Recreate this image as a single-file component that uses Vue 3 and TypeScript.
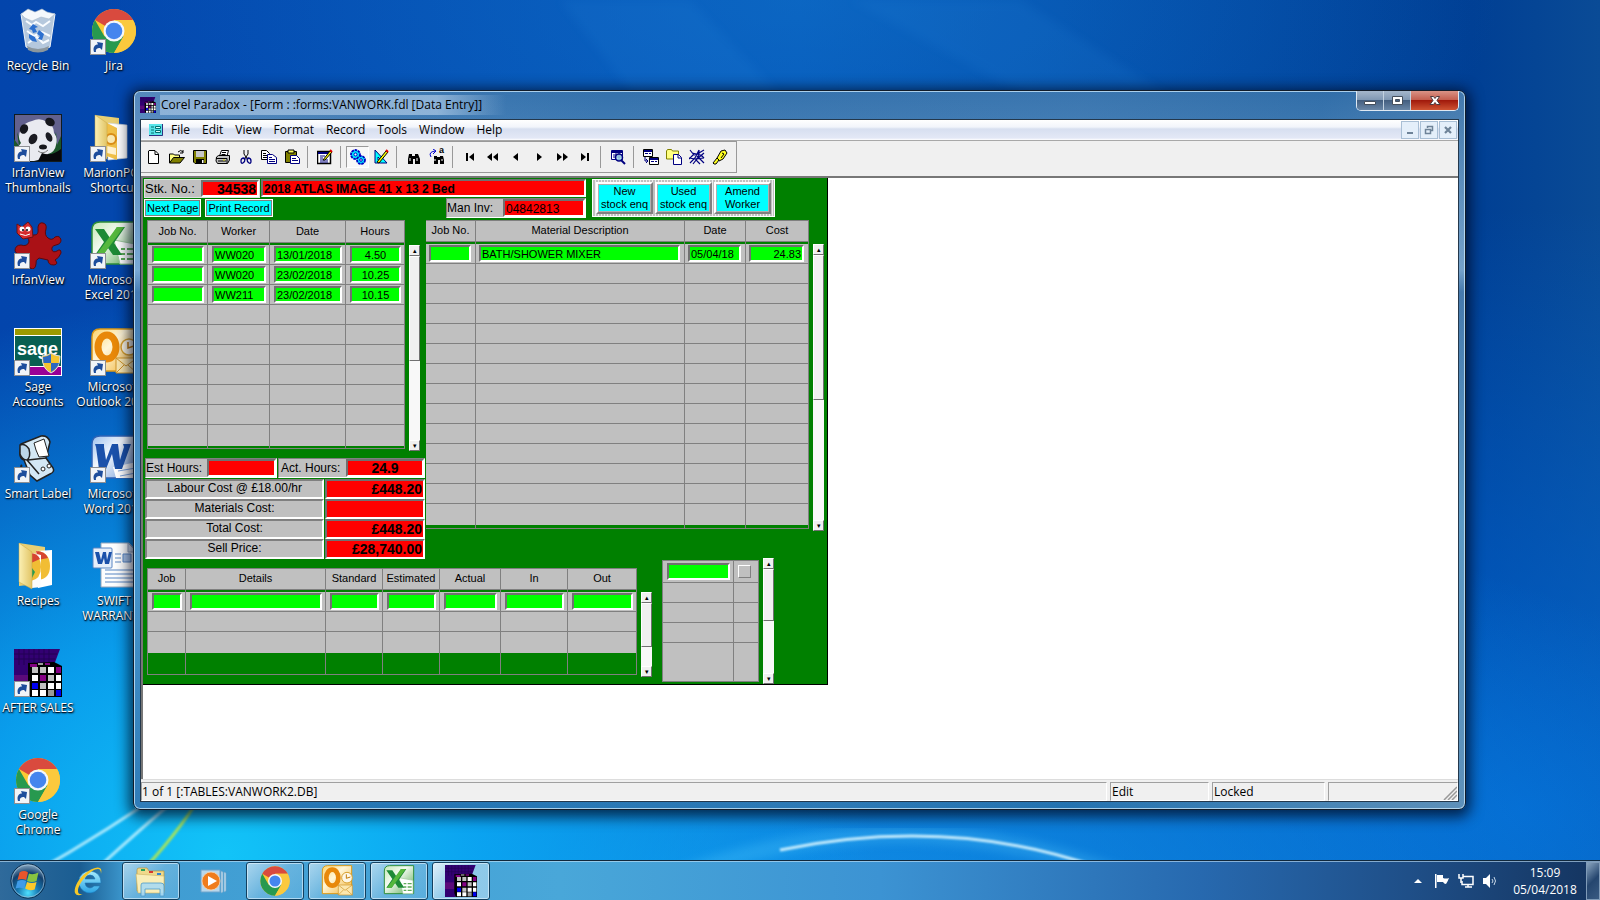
<script setup lang="ts">
interface Shortcut { icon: string; label: string; link: boolean }
interface Column { name: string; width: number }
interface Tool { icon?: string; label?: string; pressed?: boolean; sep?: boolean }

const shortcuts: Shortcut[] = [
  { icon: 'bin', label: 'Recycle Bin', link: false },
  { icon: 'panda', label: 'IrfanView\nThumbnails', link: true },
  { icon: 'irfan', label: 'IrfanView', link: true },
  { icon: 'sage', label: 'Sage\nAccounts', link: true },
  { icon: 'printer', label: 'Smart Label', link: true },
  { icon: 'recipes', label: 'Recipes', link: false },
  { icon: 'paradox', label: 'AFTER SALES', link: true },
  { icon: 'chrome', label: 'Google\nChrome', link: true },
  { icon: 'chrome', label: 'Jira', link: true },
  { icon: 'folder', label: 'MarionPC -\nShortcut', link: true },
  { icon: 'excel', label: 'Microsoft\nExcel 2010', link: true },
  { icon: 'outlook', label: 'Microsoft\nOutlook 2010', link: true },
  { icon: 'word', label: 'Microsoft\nWord 2010', link: true },
  { icon: 'document', label: 'SWIFT\nWARRANTY', link: false },
]

const menus = ['File', 'Edit', 'View', 'Format', 'Record', 'Tools', 'Window', 'Help']

const tools: Tool[] = [
  { icon: 'new', label: 'New' }, { icon: 'open', label: 'Open' }, { icon: 'save', label: 'Save' },
  { icon: 'print', label: 'Print' }, { icon: 'cut', label: 'Cut' }, { icon: 'copy', label: 'Copy' },
  { icon: 'paste', label: 'Paste' }, { sep: true },
  { icon: 'edit', label: 'Edit data' }, { sep: true },
  { icon: 'gears', label: 'Run form', pressed: true }, { icon: 'design', label: 'Design form' }, { sep: true },
  { icon: 'find', label: 'Locate value' }, { icon: 'replace', label: 'Locate next' }, { sep: true },
  { icon: 'first', label: 'First record' }, { icon: 'rew', label: 'Previous set' },
  { icon: 'prev', label: 'Previous record' }, { icon: 'next', label: 'Next record' },
  { icon: 'fwd', label: 'Next set' }, { icon: 'last', label: 'Last record' }, { sep: true },
  { icon: 'filter', label: 'Filter' }, { sep: true },
  { icon: 'model', label: 'Data model' }, { icon: 'explorer', label: 'Project viewer' },
  { icon: 'tree', label: 'Object tree' }, { icon: 'expert', label: 'Expert' },
]

const workCols: Column[] = [
  { name: 'Job No.', width: 60 }, { name: 'Worker', width: 62 },
  { name: 'Date', width: 76 }, { name: 'Hours', width: 60 },
]
const work: string[][] = [
  ['', 'WW020', '13/01/2018', '4.50'],
  ['', 'WW020', '23/02/2018', '10.25'],
  ['', 'WW211', '23/02/2018', '10.15'],
]
const materialCols: Column[] = [
  { name: 'Job No.', width: 49 }, { name: 'Material Description', width: 209 },
  { name: 'Date', width: 61 }, { name: 'Cost', width: 64 },
]
const material: string[] = ['', 'BATH/SHOWER MIXER', '05/04/18', '24.83']
const jobCols: Column[] = [
  { name: 'Job', width: 38 }, { name: 'Details', width: 140 }, { name: 'Standard', width: 57 },
  { name: 'Estimated', width: 57 }, { name: 'Actual', width: 61 }, { name: 'In', width: 67 }, { name: 'Out', width: 70 },
]
const costs = [
  { id: 'labour', label: 'Labour Cost @ £18.00/hr', value: '£448.20' },
  { id: 'materials', label: 'Materials Cost:', value: '' },
  { id: 'total', label: 'Total Cost:', value: '£448.20' },
  { id: 'sell', label: 'Sell Price:', value: '£28,740.00' },
]
const tasks = [
  { icon: 'ie', label: 'Internet Explorer', open: false },
  { icon: 'files', label: 'Windows Explorer', open: true },
  { icon: 'media', label: 'Windows Media Player', open: false },
  { icon: 'chrome', label: 'Google Chrome', open: true },
  { icon: 'outlook', label: 'Microsoft Outlook', open: true },
  { icon: 'excel', label: 'Microsoft Excel', open: true },
  { icon: 'paradox', label: 'Corel Paradox', open: true, active: true },
]
</script>

<template>
  <svg class="sprite" aria-hidden="true">
    <defs>
      <linearGradient id="g-fold" x1="0" x2="1"><stop offset="0" stop-color="#fbf0b4" /><stop offset="1" stop-color="#e2c566" /></linearGradient>
      <linearGradient id="g-green" x1="0" y1="0" x2="1" y2="1"><stop offset="0" stop-color="#c4e8b4" /><stop offset=".4" stop-color="#f4fbf2" /><stop offset="1" stop-color="#55a850" /></linearGradient>
      <linearGradient id="g-orange" x1="0" y1="0" x2="1" y2="1"><stop offset="0" stop-color="#fbd46c" /><stop offset=".4" stop-color="#fff6d8" /><stop offset="1" stop-color="#f0b030" /></linearGradient>
      <linearGradient id="g-blue" x1="0" y1="0" x2="1" y2="1"><stop offset="0" stop-color="#9cc0ec" /><stop offset=".4" stop-color="#f2f7fe" /><stop offset="1" stop-color="#6f9ad6" /></linearGradient>
      <linearGradient id="g-ie" x1="0" y1="0" x2="0" y2="1"><stop offset="0" stop-color="#a8ecff" /><stop offset="1" stop-color="#2ba4e4" /></linearGradient>
      <radialGradient id="g-orb" cx=".5" cy=".85" r=".9"><stop offset="0" stop-color="#4fe0ff" /><stop offset=".35" stop-color="#1576b0" /><stop offset=".65" stop-color="#123f6c" /><stop offset="1" stop-color="#a9c4d8" /></radialGradient>
    </defs>
    <symbol id="i-link" viewBox="0 0 16 16">
      <rect x=".5" y=".5" width="15" height="15" fill="#f1f4f8" stroke="#8d8f93" />
      <path d="M4 13C2.500 8 5 5.500 8 5.500L7 3l6 1-1 7-2-2C7 9 5.500 10 6 13z" fill="#1d4d9c" />
    </symbol>
    <symbol id="i-bin" viewBox="0 0 48 48">
      <path d="M7 7l5 33q12 6 24 0l5-33z" fill="#c9d6e2" fill-opacity=".9" stroke="#eef4fa" />
      <path d="M7 7l7-5 7 3 7-3 5 3 8 2-6 5-8-2-9 4-7-3z" fill="#f4f8fc" stroke="#a8b9c9" stroke-width=".6" />
      <path d="M12 14l6 4 4-3 7 4 7-5M13 24l7 5 8-4 8 4M14 36l9-6 6 6 6-3" stroke="#f9fcff" stroke-width="2" fill="none" />
      <path d="M15 22l4-5 5 3-3 1 2 4-4 1-1-3zM25 23l5 4-2 6-4-1 2-3-3-2zM15 27l6 3 2 5-5-1-3-3z" fill="#2d70cf" />
      <path d="M13 39q11 6 22 0l-1 4q-10 5-20 0z" fill="#8b969d" />
    </symbol>
    <symbol id="i-chrome" viewBox="0 0 48 48">
      <circle cx="24" cy="24" r="22" fill="#fcc934" />
      <path d="M24 24L4.950 13A22 22 0 0 1 43.050 13L24 13z" fill="#d94a3e" />
      <path d="M4.950 13A22 22 0 0 0 24 46L33.500 29.500 24 24 14.500 29.500z" fill="#27994f" />
      <path d="M43.050 13A22 22 0 0 1 24 46L33.500 29.500 33 18 24 13z" fill="#fbc93d" />
      <circle cx="24" cy="24" r="10.500" fill="#f4f7fb" /><circle cx="24" cy="24" r="8.300" fill="#4585ee" />
    </symbol>
    <symbol id="i-panda" viewBox="0 0 48 48">
      <rect width="48" height="48" fill="#111b1d" /><rect x="1" y="1" width="46" height="32" fill="#62618e" />
      <path d="M0 47V25l5 7-2-14 6 16V20l4 22zM34 47l3-26 1 12 4-15 1 13 4-9v25z" fill="#1c562b" />
      <path d="M4 47Q0 36 7 29q-4-6 0-14 4-7 11-8 8-4 15 1 7 3 7 11 4 5 2 12-1 7-8 9-3 5-14 7z" fill="#e9eaf0" />
      <ellipse cx="10" cy="15" rx="4" ry="5" transform="rotate(25 10 15)" fill="#16171d" /><ellipse cx="36" cy="8" rx="5" ry="4" transform="rotate(30 36 8)" fill="#16171d" />
      <ellipse cx="19" cy="25" rx="4" ry="5.500" transform="rotate(30 19 25)" fill="#1b1b22" /><ellipse cx="35" cy="23" rx="3" ry="5" transform="rotate(-25 35 23)" fill="#1b1b22" />
      <ellipse cx="29" cy="33" rx="4" ry="2.500" fill="#17171c" /><path d="M24 47l4-8q9 4 19-4v12z" fill="#08090c" />
      <path d="M24 37q5 4 10-1" stroke="#777" fill="none" />
    </symbol>
    <symbol id="i-irfan" viewBox="0 0 48 48">
      <path d="M20 14C25 14 24 10 24 6q1-5 5-4 4 1 3 6-2 6 2 9 4 3 7-1 5-2 6 3 0 4-5 5-5 1-4 5 1 3 5 1 4-3 4 2-2 5-6 7 4 4-1 5-6 0-6-5l-9-2q-4 2-3 6-1 7-6 4-3-5-1-10-2-6-7-4Q3 34 1 30q0-6 6-6 6 2 8-3 0-5-5-6z" fill="#aa1116" stroke="#5d080b" />
      <path d="M3 3l5 3 6-5 4 5 1 10-10 2-6-6z" fill="#d62b2d" stroke="#6d1012" /><circle cx="8" cy="8" r="2.500" fill="#fff" /><circle cx="14" cy="8" r="2.500" fill="#fff" /><circle cx="9" cy="9" r="1" /><circle cx="13" cy="9" r="1" /><path d="M6 13q6 3 10 0" stroke="#fff" fill="none" />
    </symbol>
    <symbol id="i-sage" viewBox="0 0 48 48">
      <rect width="48" height="48" fill="#fff" /><rect x="1" y="1" width="46" height="6" fill="#9c9a00" /><rect x="1" y="8" width="46" height="30" fill="#085f52" /><rect x="1" y="39" width="46" height="8" fill="#990096" />
    </symbol>
    <symbol id="i-shield" viewBox="0 0 20 22">
      <path d="M1 4q5 0 9-3 4 3 9 3 0 13-9 17Q1 17 1 4z" fill="#f4c52f" stroke="#d9dfe6" /><path d="M2 5q4 0 8-3v9H2.500zM10 11h8q-2 6-8 9z" fill="#2b68c2" />
    </symbol>
    <symbol id="i-printer" viewBox="0 0 48 48">
      <path d="M8 30q-3 2 5 9" fill="none" stroke="#222" stroke-width="2" />
      <path d="M7 9l20-8q7-1 9 6l-4 16 7 10q2 4-3 6l-13 7-7-6-6-15q-5-2-4-8z" fill="#d4e8f5" stroke="#222" stroke-width="1.500" />
      <path d="M6 10q5-2 9 4 2 8-2 11-5 0-7-6zM13 25l12 14M14 25l18-2" fill="#bdd7e8" stroke="#222" stroke-width="1.500" />
      <path d="M20 8l10-4 5 17-10 1-3-7z" fill="#fff" stroke="#222" /><circle cx="29" cy="34" r="2" fill="#fff" stroke="#222" /><circle cx="35" cy="31" r="2" fill="#fff" stroke="#222" />
    </symbol>
    <symbol id="i-recipes" viewBox="0 0 48 48">
      <path d="M5 1l26 4v36L5 44z" fill="#e8cf73" /><path d="M22 9l16-1v35l-14 3z" fill="#fff" /><path d="M24 9q12 2 12 15T24 38z" fill="#f1bd34" /><path d="M22 9q9 0 12 7l-10 2z" fill="#d64532" />
      <path d="M14 10l13 3v32l-9 1z" fill="#fdfdfd" /><path d="M16 12q11 1 11 13T17 39z" fill="#f1bd34" /><path d="M14 11q9-1 12 6l-9 4z" fill="#d64532" /><path d="M15 22l6 8-4 8z" fill="#2b9b50" />
      <path d="M5 1l13 9v37L5 40z" fill="url(#g-fold)" stroke="#caa747" stroke-width=".5" />
    </symbol>
    <symbol id="i-folder" viewBox="0 0 48 48">
      <path d="M5 1l24 3v38L5 44z" fill="#e8cf73" /><path d="M18 9l19 2v33l-19 2z" fill="#fff" stroke="#cdd2d8" stroke-width=".7" />
      <path d="M17 9l10 5v32l-10-4z" fill="#f0c048" /><circle cx="21" cy="25" r="5" fill="#f9e8b0" stroke="#d98d17" stroke-width="2" /><path d="M17 32l9 2v7l-9-2z" fill="#fff2cf" />
      <path d="M5 1l12 8v36L5 40z" fill="url(#g-fold)" stroke="#caa747" stroke-width=".5" />
    </symbol>
    <symbol id="i-excel" viewBox="0 0 48 48">
      <path d="M10 1h36v42H2V9q0-8 8-8z" fill="url(#g-green)" stroke="#2f8f3a" stroke-width="1.500" />
      <path d="M24 19l21 4v20H30z" fill="#fff" stroke="#9dc99d" /><path d="M31 28h4m2 0h6M31 33h4m2 0h6M31 38h4m2 0h6" stroke="#5fac59" stroke-width="2" />
      <path d="M5 8h9l6 9 7-11h8L24 22l8 12h-9l-5-7-5 7H5l9-13z" fill="#1e8a36" /><path d="M27 6h7L13 34H6z" fill="#55b83d" />
    </symbol>
    <symbol id="i-outlook" viewBox="0 0 48 48">
      <path d="M10 1h36v42H2V9q0-8 8-8z" fill="url(#g-orange)" stroke="#dd9915" stroke-width="1.500" />
      <ellipse cx="17" cy="19" rx="9" ry="12" fill="none" stroke="#e88809" stroke-width="7" />
      <circle cx="39" cy="19" r="8" fill="#fdf7e6" stroke="#d9a02c" stroke-width="1.500" /><path d="M38 14v6l6-2" stroke="#c37b0a" stroke-width="1.500" fill="none" />
      <path d="M26 30h21v15H26z" fill="#fbe7ae" stroke="#cf9428" /><path d="M26 30l10 8 11-8M26 45l8-8M47 45l-9-8" stroke="#cf9428" fill="none" />
    </symbol>
    <symbol id="i-word" viewBox="0 0 48 48">
      <path d="M10 1h36v42H2V9q0-8 8-8z" fill="url(#g-blue)" stroke="#2f63b5" stroke-width="1.500" /><path d="M23 32l24-5v16H26z" fill="#fff" /><path d="M28 36l18-3M30 41l16-3" stroke="#7da3db" />
      <path d="M5 9h9v3l2 13L22 9h6l2 16 4-13-1-3h8l-9 25h-7l-3-15-6 15h-7L6 12z" fill="#1b51aa" />
    </symbol>
    <symbol id="i-document" viewBox="0 0 48 48">
      <path d="M11 1h28l8 9v35H11z" fill="#fdfefe" stroke="#96a6bc" /><path d="M38 1v9h9z" fill="#d6e0ee" stroke="#96a6bc" /><path d="M25 12h6M25 16h6M25 20h6M15 28h28M15 32h28M15 36h28M15 40h28" stroke="#5987c4" /><path d="M33 12h8v8h-8z" fill="#a8c4e8" stroke="#5987c4" />
      <rect x="3" y="6" width="19" height="20" rx="1" fill="#e7effa" stroke="#5b86c3" /><path d="M5 10h4l2 8 2-8h3l1 8 2-8h3l-3 12h-4l-1-6-2 6H8z" fill="#1b51aa" />
    </symbol>
    <symbol id="i-paradox" viewBox="0 0 48 48">
      <path d="M0 0h46L40 16H16v32H0z" fill="#330072" /><path d="M0 5h43M0 10h41M5 0v16M10 0v16M15 0v16M20 0v14M25 0v14M30 0v14M35 0v14" stroke="#220055" /><path d="M0 26h14v10H0z" fill="#5b0a7a" />
      <path d="M14 14l26-1 8 4v31H16l-2-6z" /><path d="M16 15h7v3h-7zM31 14h5v2h-5z" fill="#800080" /><path d="M24 14h5v2h-5z" fill="#999" />
      <path d="M18 18h6v6h-6zM26 18h6v6h-6zM34 26h6v6h-6zM26 34h6v6h-6z" fill="#c0c0c0" /><path d="M34 18h6v6h-6zM18 26h6v6h-6zM42 26h5v6h-5zM34 34h6v6h-6zM42 34h5v6h-5zM18 41h6v6h-6zM26 41h6v6h-6z" fill="#fff" /><path d="M42 18h5v6h-5zM26 26h6v6h-6z" fill="#850085" /><path d="M18 34h6v6h-6zM42 41h5v6h-5z" fill="#0000f0" /><path d="M34 41h6v6h-6z" fill="#999" />
    </symbol>
    <symbol id="i-orb" viewBox="0 0 40 40">
      <circle cx="20" cy="20" r="18" fill="url(#g-orb)" stroke="#0b2a48" /><circle cx="20" cy="20" r="17" fill="none" stroke="#a8c8df" stroke-opacity=".7" />
      <path d="M11 11q5-3 9 0l-2 8q-4-2-9 0z" fill="#e8552b" /><path d="M21 12q4 2 10-1l-2 9q-5 2-10 0z" fill="#88c440" /><path d="M9 20q5-2 9 0l-2 8q-5-2-9 0z" fill="#3f9be8" /><path d="M19 21q5 2 10 0l-2 8q-5 2-10-1z" fill="#fbc92b" />
    </symbol>
    <symbol id="i-ie" viewBox="0 0 32 32">
      <path d="M17 6a11 11 0 1 0 10 15h-6q-4 4-8 0l-1-3h16Q28 7 17 6zM12 14q1-4 5-4t5 4z" fill="url(#g-ie)" stroke="#1b78bb" stroke-width=".6" />
      <path d="M28 9q2-8-6-6C11 6 0 20 2 28q2 4 8 1-5 1-5-3C5 18 18 4 25 4q3 0 3 5z" fill="#f7c829" />
    </symbol>
    <symbol id="i-files" viewBox="0 0 32 32">
      <path d="M2 5q0-2 2-2h8l2 3h15v20H2z" fill="#efd98b" stroke="#b8963d" stroke-width=".7" /><path d="M6 4h4v2H6z" fill="#28a45a" /><path d="M14 6h4v2h-4z" fill="#d8372d" /><path d="M22 8h4v2h-4z" fill="#2d83d4" /><path d="M1 9l28 2v17H3z" fill="#f9eeb8" stroke="#cdb160" stroke-width=".6" />
      <path d="M6 31V20q0-2 2-2h18q3 0 3 3v10h-4v-7H10v7z" fill="#a8d9f2" fill-opacity=".9" stroke="#4c9bc9" stroke-width=".8" />
    </symbol>
    <symbol id="i-media" viewBox="0 0 32 32">
      <path d="M4 5h19v22H4z" fill="#b8d7ec" stroke="#6fa4cb" /><path d="M24 6l2 1v20l-2 1zM27 7l2 1v18l-2 1z" fill="#b8d7ec" stroke="#6fa4cb" stroke-width=".6" /><circle cx="14" cy="16" r="9" fill="#f07c1c" stroke="#fbd2a6" stroke-width=".8" /><path d="M11 11l9 5-9 5z" fill="#fff" />
    </symbol>
    <symbol id="t-new" viewBox="0 0 16 16"><path d="M3 1.500h6l3.500 3.500v9.500H2.500V2z" fill="#fff" stroke="#000" /><path d="M9 2v3.500h3" fill="none" stroke="#000" /></symbol>
    <symbol id="t-open" viewBox="0 0 16 16"><path d="M.5 14V5h4l1 1h5v3" fill="#ffff80" stroke="#000" /><path d="M.5 14l4-5.500h11L11 14z" fill="#808000" stroke="#000" /><path d="M9 3q3-3 5 0m0-2v3h-3" fill="none" stroke="#000" /></symbol>
    <symbol id="t-save" viewBox="0 0 16 16"><path d="M1.500 1.500h13v13H3l-1.500-1.500z" fill="#808000" stroke="#000" /><path d="M4 2h8v6H4z" fill="#c8c8c8" /><path d="M4 10h8v4H4z" /><path d="M10 11h1.500v3H10z" fill="#fff" /></symbol>
    <symbol id="t-print" viewBox="0 0 16 16"><path d="M4.500 7l2-5.500h7L12 7z" fill="#fff" stroke="#000" /><path d="M7 3.500h4M6.500 5.500h4" stroke="#000" /><path d="M1.500 8l2-1.500h11V11l-2 3.500h-10L1 12z" fill="#c0c0c0" stroke="#000" /><path d="M1 9.500h11v5M3 12h8" stroke="#000" fill="none" /><path d="M8 11h2" stroke="#dddd00" /></symbol>
    <symbol id="t-cut" viewBox="0 0 16 16"><path d="M6 1v4l4 6M10 1v4l-4 6" fill="none" stroke="#000" /><path d="M6 9q-3 0-3 3t2 2 2-4zM10 9q3 0 3 3t-2 2-2-4z" fill="none" stroke="#000080" stroke-width="1.300" /></symbol>
    <symbol id="t-copy" viewBox="0 0 16 16"><path d="M.5 1.500h5l3 3v6h-8z" fill="#fff" stroke="#000" /><path d="M2 4.500h3M2 6.500h5M2 8.500h5" stroke="#000" /><path d="M6.500 5.500h5l4 3v6h-9z" fill="#fff" stroke="#000080" /><path d="M8 8.500h3M8 10.500h6M8 12.500h6" stroke="#000080" /></symbol>
    <symbol id="t-paste" viewBox="0 0 16 16"><path d="M1.500 2.500h11v11h-11z" fill="#808000" stroke="#000" /><path d="M4 1h6v3H4z" fill="#ffff60" stroke="#000" /><path d="M6.500 6.500h6l3 3v5h-9z" fill="#fff" stroke="#000080" /><path d="M8 9.500h4M8 11.500h6" stroke="#000080" /></symbol>
    <symbol id="t-edit" viewBox="0 0 16 16"><path d="M.5 2.500h13v12H.5z" fill="#fff" stroke="#000" stroke-width="1.500" /><path d="M1 4h12" stroke="#000080" stroke-width="2" /><path d="M3 7h5M3 9h3M3 11h8M3 13h8" stroke="#000080" /><path d="M6 11l7-9 2 1-7 8z" fill="#ffff00" stroke="#000" /><path d="M13 1l2 2" stroke="#e00000" stroke-width="2" /></symbol>
    <symbol id="t-gears" viewBox="0 0 16 16"><circle cx="5.500" cy="5.500" r="4.500" fill="#00e5ff" stroke="#0000c0" stroke-width="1.800" stroke-dasharray="2.500 .8" /><circle cx="5.500" cy="5.500" r="1.500" fill="#fff" stroke="#0000c0" /><circle cx="11" cy="11" r="4" fill="#00e5ff" stroke="#0000c0" stroke-width="1.800" stroke-dasharray="2.500 .8" /><circle cx="11" cy="11" r="1.300" fill="#fff" stroke="#0000c0" /></symbol>
    <symbol id="t-design" viewBox="0 0 16 16"><path d="M2 1v13h12z" fill="#00ffff" stroke="#000080" /><path d="M5 8v3h3z" fill="#fff" stroke="#000080" /><path d="M4 13l9-11 2 1-9 11z" fill="#ffff00" stroke="#000" /><path d="M13 1l2 2" stroke="#e00000" stroke-width="2" /></symbol>
    <symbol id="t-find" viewBox="0 0 16 16"><path d="M3 5h3v2h3V5h3l2 5v5H9v-5H7v5H2v-5z" /><path d="M4 9v3M11 9v3" stroke="#fff" /></symbol>
    <symbol id="t-replace" viewBox="0 0 16 16"><path d="M5 7h3v1h3V7h3l1 4v4h-4v-4H9v4H5v-4z" /><path d="M6 10v2M13 10v2" stroke="#fff" /><path d="M2 8q-3-5 4-6M4 0l3 2-3 3" stroke="#0000d0" fill="none" /></symbol>
    <symbol id="t-first" viewBox="0 0 16 16"><path d="M4 4h2v8H4zM12 4v8L7 8z" /></symbol>
    <symbol id="t-rew" viewBox="0 0 16 16"><path d="M7 4v8L2 8zM13 4v8L8 8z" /></symbol>
    <symbol id="t-prev" viewBox="0 0 16 16"><path d="M10 4v8L5 8z" /></symbol>
    <symbol id="t-next" viewBox="0 0 16 16"><path d="M6 4v8l5-4z" /></symbol>
    <symbol id="t-fwd" viewBox="0 0 16 16"><path d="M3 4v8l5-4zM9 4v8l5-4z" /></symbol>
    <symbol id="t-last" viewBox="0 0 16 16"><path d="M4 4v8l5-4zM10 4h2v8h-2z" /></symbol>
    <symbol id="t-filter" viewBox="0 0 16 16"><path d="M1.500 1.500h11v9h-11z" fill="#fff" stroke="#000080" /><path d="M1 3h12" stroke="#000080" stroke-width="2" /><path d="M3 6h9M3 8h9M6 4v6M9 4v6" stroke="#000080" /><circle cx="9" cy="8.500" r="3.500" fill="#a8dcec" fill-opacity=".8" stroke="#000080" stroke-width="1.500" /><path d="M11 11l4 4" stroke="#000080" stroke-width="2" /></symbol>
    <symbol id="t-model" viewBox="0 0 16 16"><path d="M.5.5h9v7h-9zM6.500 8.500h9v7h-9z" fill="#fff" stroke="#000" /><path d="M1 2h8M7 10h8" stroke="#000080" stroke-width="2" /><path d="M2 4.500h3M6 4.500h2M8 12.500h3M12 12.500h2M2 8v4h3m-2-2l2 2-2 2" stroke="#000080" fill="none" /></symbol>
    <symbol id="t-explorer" viewBox="0 0 16 16"><path d="M.5 2l1-1.500h4l1 1.500h6v8H.5z" fill="#ffff80" stroke="#808000" /><path d="M7.500 5.500h5l3 3v7h-8z" fill="#fff" stroke="#000080" /><path d="M12 6v3h3" fill="none" stroke="#000080" /></symbol>
    <symbol id="t-tree" viewBox="0 0 16 16"><path d="M1 1l4 5 5-2 5-3M0 10l4-4M3 4l9 2 3 3M1 14l5-5 4-8M4 15l4-5 7-6M10 1v5l-3 5 4 4M0 9l6 1 9-1M8 7l7 7" stroke="#000080" fill="none" stroke-width="1.200" /></symbol>
    <symbol id="t-expert" viewBox="0 0 16 16"><path d="M5 9l4-7 4-1 2 3-4 6-4 2z" fill="#ffff20" stroke="#000" /><path d="M5 9l2 2-3 4-2 0-1-1z" fill="#ffff20" stroke="#000" /><path d="M10 4l2 1-3 4" stroke="#000" fill="none" /></symbol>
  </svg>

  <div class="desktop">
    <svg class="wallpaper" viewBox="0 0 1600 900" preserveAspectRatio="none" aria-hidden="true">
      <defs>
        <filter id="soft"><feGaussianBlur stdDeviation="5" /></filter>
        <filter id="glow"><feGaussianBlur stdDeviation="1" /></filter>
      </defs>
      <path d="M850 0h170L1300 180H1180zM560 0h130l170 180H700z" fill="#2a8be0" opacity=".12" filter="url(#soft)" />
      <path d="M620 900Q900 770 1180 900" fill="none" stroke="#5bd0ff" stroke-width="16" opacity=".25" filter="url(#soft)" />
      <path d="M780 850Q950 815 1100 868" fill="none" stroke="#d8f5ff" stroke-width="3" opacity=".9" filter="url(#glow)" />
      <path d="M30 875Q110 830 180 780M90 875Q150 820 210 770" fill="none" stroke="#c9f5ff" stroke-width="3" opacity=".8" filter="url(#glow)" />
      <path d="M145 868Q185 825 210 780" fill="none" stroke="#b7e84c" stroke-width="3" opacity=".9" filter="url(#glow)" />
    </svg>

    <nav class="shortcuts" aria-label="Desktop shortcuts">
      <a v-for="s in shortcuts" :key="s.label" href="#" class="shortcut">
        <span class="picture">
          <svg class="big"><use :href="'#i-' + s.icon" /></svg>
          <template v-if="s.icon === 'sage'">
            <b class="brand">sage</b>
            <svg class="shield"><use href="#i-shield" /></svg>
          </template>
          <svg v-if="s.link" class="arrow"><use href="#i-link" /></svg>
        </span>
        <span class="caption">{{ s.label }}</span>
      </a>
    </nav>

    <section class="window" aria-label="Corel Paradox">
      <header class="titlebar">
        <svg class="app"><use href="#i-paradox" /></svg>
        <h1>Corel Paradox - [Form : :forms:VANWORK.fdl [Data Entry]]</h1>
        <div class="controls">
          <button type="button" aria-label="Minimise"><svg viewBox="0 0 16 12"><path d="M2.500 6.500h11v3h-11z" fill="#fff" stroke="#454f5c" /></svg></button>
          <button type="button" aria-label="Maximise"><svg viewBox="0 0 16 12"><path d="M3.500 1.500h10v8h-10zM6.500 4.500v2h4v-2z" fill="#fff" fill-rule="evenodd" stroke="#454f5c" /></svg></button>
          <button type="button" class="close" aria-label="Close"><svg viewBox="0 0 16 12"><path d="M3.500 1.500h3L8 3.500l1.500-2h3L10 5.500l3 4H9.500L8 7.500l-1.500 2H3l3-4z" fill="#fff" stroke="#4d3a3e" /></svg></button>
        </div>
      </header>

      <div class="client">
        <div class="menubar">
          <svg class="doc" viewBox="0 0 14 12"><path d="M0 0h14v12H0z" fill="#58e4ea" /><path d="M13.500 0v11.500H0" fill="none" stroke="#303080" /><path d="M2 3h3M2 6h3M2 9h3" stroke="#007070" /><path d="M6.500 2.500h5v2h-5zM6.500 6.500h5v2h-5z" fill="#d6ffff" stroke="#007070" /></svg>
          <button v-for="m in menus" :key="m" type="button">{{ m }}</button>
          <div class="mdi">
            <button type="button" aria-label="Minimise form"><svg viewBox="0 0 12 12"><path d="M3 8h6v2H3z" fill="#6e8398" /></svg></button>
            <button type="button" aria-label="Restore form"><svg viewBox="0 0 12 12"><path d="M4.500 4V2.500h5v4H8M2.500 5.500h5v4h-5z" fill="none" stroke="#6e8398" stroke-width="1.500" /></svg></button>
            <button type="button" aria-label="Close form"><svg viewBox="0 0 12 12"><path d="M3 3l6 6M9 3l-6 6" stroke="#6e8398" stroke-width="2.200" /></svg></button>
          </div>
        </div>

        <div class="toolrow">
          <div class="toolbar" role="toolbar" aria-label="Form tools">
            <template v-for="(t, i) in tools" :key="i">
              <i v-if="t.sep"></i>
              <button v-else type="button" :class="{ pressed: t.pressed }" :aria-label="t.label"><svg><use :href="'#t-' + t.icon" /></svg><b v-if="t.icon === 'replace'">a</b></button>
            </template>
          </div>
        </div>

        <main class="canvas">
          <form class="form" @submit.prevent>
            <div class="top">
              <div class="ident">
                <div class="line">
                  <div class="stock"><label for="stk">Stk. No.:</label><input id="stk" class="red bold right" value="34538"></div>
                  <input class="red desc" aria-label="Description" value="2018 ATLAS IMAGE 41 x 13 2 Bed">
                </div>
                <div class="line second">
                  <button type="button" class="cyan">Next Page</button>
                  <button type="button" class="cyan">Print Record</button>
                  <div class="inv"><label for="inv">Man Inv:</label><input id="inv" class="red" value="04842813"></div>
                </div>
              </div>
              <div class="panel">
                <button type="button">New<br>stock enq</button>
                <button type="button">Used<br>stock enq</button>
                <button type="button">Amend<br>Worker</button>
              </div>
            </div>

            <div class="middle">
              <div class="leftside">
                <div class="withbar work">
                  <table>
                    <colgroup><col v-for="c in workCols" :key="c.name" :style="{ width: c.width + 'px' }"></colgroup>
                    <thead><tr><th v-for="c in workCols" :key="c.name">{{ c.name }}</th></tr></thead>
                    <tbody>
                      <tr v-for="r in 10" :key="r">
                        <td v-for="(c, k) in workCols" :key="c.name">
                          <input v-if="r <= work.length" class="cell" :class="{ center: k === 3 }" :aria-label="c.name + ' ' + r" :value="work[r - 1][k]">
                        </td>
                      </tr>
                    </tbody>
                  </table>
                  <div class="scroll"><button type="button" aria-label="Scroll up">▴</button><div class="track"><span class="thumb t-work"></span></div><button type="button" aria-label="Scroll down">▾</button></div>
                </div>
                <div class="summary">
                  <div class="hours">
                    <div class="est"><label for="est">Est Hours:</label><input id="est" class="red"></div>
                    <div class="act"><label for="act">Act. Hours:</label><input id="act" class="red bold center" value="24.9"></div>
                  </div>
                  <div v-for="c in costs" :key="c.id" class="cost">
                    <label :for="c.id">{{ c.label }}</label><input :id="c.id" class="red bold right" :value="c.value">
                  </div>
                </div>
              </div>

              <div class="withbar materials">
                <table>
                  <colgroup><col v-for="c in materialCols" :key="c.name" :style="{ width: c.width + 'px' }"></colgroup>
                  <thead><tr><th v-for="c in materialCols" :key="c.name">{{ c.name }}</th></tr></thead>
                  <tbody>
                    <tr v-for="r in 14" :key="r">
                      <td v-for="(c, k) in materialCols" :key="c.name">
                        <input v-if="r === 1" class="cell" :class="{ right: k === 3 }" :aria-label="c.name" :value="material[k]">
                      </td>
                    </tr>
                  </tbody>
                </table>
                <div class="scroll"><button type="button" aria-label="Scroll up">▴</button><div class="track"><span class="thumb t-mat"></span></div><button type="button" aria-label="Scroll down">▾</button></div>
              </div>
            </div>

            <div class="bottom">
              <div class="withbar jobs">
                <table>
                  <colgroup><col v-for="c in jobCols" :key="c.name" :style="{ width: c.width + 'px' }"></colgroup>
                  <thead><tr><th v-for="c in jobCols" :key="c.name">{{ c.name }}</th></tr></thead>
                  <tbody>
                    <tr v-for="r in 4" :key="r">
                      <td v-for="c in jobCols" :key="c.name"><input v-if="r === 1" class="cell" :aria-label="c.name"></td>
                    </tr>
                  </tbody>
                </table>
                <div class="scroll"><button type="button" aria-label="Scroll up">▴</button><div class="track"><span class="thumb t-job"></span></div><button type="button" aria-label="Scroll down">▾</button></div>
              </div>
              <div class="withbar flags">
                <table>
                  <colgroup><col class="wide"><col class="narrow"></colgroup>
                  <tbody>
                    <tr v-for="r in 5" :key="r">
                      <td><input v-if="r === 1" class="cell" aria-label="Item"></td>
                      <td><input v-if="r === 1" type="checkbox" aria-label="Done"></td>
                    </tr>
                  </tbody>
                </table>
                <div class="scroll"><button type="button" aria-label="Scroll up">▴</button><div class="track"><span class="thumb t-flag"></span></div><button type="button" aria-label="Scroll down">▾</button></div>
              </div>
            </div>
          </form>
        </main>

        <footer class="status">
          <span class="grow">1 of 1 [:TABLES:VANWORK2.DB]</span><span class="s1">Edit</span><span class="s2">Locked</span>
          <span class="s3"><svg viewBox="0 0 14 14"><path d="M1 14L14 1M5 14l9-9M9 14l5-5" stroke="#999" stroke-width="1.500" /></svg></span>
        </footer>
      </div>
    </section>

    <footer class="taskbar">
      <button type="button" class="start" aria-label="Start"><svg><use href="#i-orb" /></svg></button>
      <button v-for="t in tasks" :key="t.icon" type="button" class="task" :class="{ open: t.open, active: t.active }" :aria-label="t.label"><svg><use :href="'#i-' + t.icon" /></svg></button>
      <div class="tray">
        <svg class="more" viewBox="0 0 8 16"><path d="M0 10l4-4 4 4z" fill="#fff" /></svg>
        <svg class="w16" viewBox="0 0 16 16"><path d="M1 1h1.500v14H1zM3 2h6v7H3zM9 5q3 1 6 0-1 3-3 6-2 0-3-2z" fill="#fff" /></svg>
        <svg class="w16" viewBox="0 0 16 16"><path d="M5 3.500h10v8H4V8" fill="none" stroke="#fff" stroke-width="1.500" /><path d="M7 14h7M10 12v2M1 1v4h4V1M3 5v5" fill="none" stroke="#fff" stroke-width="1.500" /></svg>
        <svg class="w16" viewBox="0 0 16 16"><path d="M1 5h3l4-4v14l-4-4H1z" fill="#fff" /><path d="M10 6q2 2 0 4M12 4q3 4 0 8" fill="none" stroke="#c8d8e8" /></svg>
        <div class="clock"><span>15:09</span><span>05/04/2018</span></div>
        <button type="button" class="peek" aria-label="Show desktop"></button>
      </div>
    </footer>
  </div>
</template>

<style>
body { margin: 0; overflow: hidden; }
</style>

<style scoped>
* { box-sizing: border-box; }
button, input { font: inherit; color: inherit; margin: 0; padding: 0; border: 0; border-radius: 0; }
.sprite { position: absolute; width: 0; height: 0; }
.desktop {
  position: relative; height: 100vh; overflow: hidden; font: 12px/15px "Open Sans", "Segoe UI", sans-serif; color: #000;
  background:
    radial-gradient(ellipse 650px 560px at 14% 95%, #12c4f8 0, rgba(10, 170, 245, .85) 40%, rgba(0, 110, 220, 0) 100%),
    radial-gradient(ellipse 1100px 420px at 50% 100%, rgba(20, 160, 245, .75) 0, rgba(0, 90, 200, 0) 100%),
    radial-gradient(ellipse 900px 600px at 95% 90%, rgba(0, 104, 216, .8) 0, rgba(0, 90, 200, 0) 100%),
    radial-gradient(ellipse 700px 300px at 50% 0, rgba(20, 120, 205, .5) 0, rgba(0, 80, 180, 0) 100%),
    linear-gradient(90deg, #0345ac 0, #0354b8 50%, #003f94 92%, #0a4b96 100%);
}
.wallpaper { position: absolute; inset: 0; width: 100%; height: 100%; }

.shortcuts { position: absolute; top: 7px; left: 0; display: grid; grid-template-rows: repeat(8, 107px); grid-auto-flow: column; grid-auto-columns: 76px; }
.shortcut { display: flex; flex-direction: column; align-items: center; gap: 3px; color: #fff; text-decoration: none; }
.picture { position: relative; width: 48px; height: 48px; }
.big { display: block; width: 48px; height: 48px; }
.arrow { position: absolute; left: 0; bottom: 0; width: 16px; height: 16px; }
.brand { position: absolute; left: 3px; top: 10px; font: bold 18px/22px "Liberation Sans", Arial, sans-serif; }
.shield { position: absolute; right: 1px; bottom: 2px; width: 20px; height: 22px; }
.caption { white-space: pre; text-align: center; line-height: 15px; text-shadow: 1px 1px 2px #000, 0 1px 1px #001a40; }

.window {
  position: absolute; top: 90px; right: 134px; bottom: 90px; left: 133px; display: flex; flex-direction: column; padding: 0 6px 7px 6px;
  border: 1px solid #111c2a; border-radius: 7px; box-shadow: inset 0 0 0 1px rgba(200, 230, 250, .8), 0 3px 14px 4px rgba(0, 8, 30, .75);
  background:
    linear-gradient(110deg, rgba(160, 190, 225, .3) 0, rgba(120, 165, 210, .15) 15%, rgba(40, 100, 160, 0) 30%, rgba(90, 140, 190, .15) 60%, rgba(20, 80, 140, .1) 75%, rgba(150, 170, 190, .5) 100%),
    linear-gradient(180deg, #3471ac 0, #6fa4d2 25%, #2b6aa8 28%, #3c93cc 60%, #2576b4 100%);
}
.titlebar { display: flex; align-items: center; height: 28px; }
.app { width: 16px; height: 16px; margin-right: 4px; }
.titlebar h1 { margin: 0; padding: 0 24px 0 1px; font-size: 12px; font-weight: 400; line-height: 20px; background: linear-gradient(90deg, rgba(195, 217, 240, .5) 0, rgba(205, 225, 245, .55) 80%, rgba(170, 200, 230, 0) 100%); white-space: nowrap; }
.controls { display: flex; align-self: flex-start; margin-left: auto; border: 1px solid #dfe9f3; border-top: 0; border-radius: 0 0 5px 5px; overflow: hidden; }
.controls button { width: 27px; height: 19px; display: grid; place-items: center; border-right: 1px solid #c3d2e0; background: linear-gradient(#a5b7cb 0, #8199b4 45%, #445f80 50%, #6986a6 100%); }
.controls svg { width: 16px; height: 12px; }
.controls .close { width: 47px; border: 0; background: linear-gradient(#d99386 0, #c46050 45%, #a11a0c 50%, #cf5332 100%); }
.client { flex: 1; min-height: 0; display: flex; flex-direction: column; border: 1px solid #24384c; background: #f0f0f0; }
.menubar { display: flex; align-items: center; height: 21px; flex: none; padding: 0 1px 0 8px; border-bottom: 1px solid #a8a8a8; background: linear-gradient(#fff 0, #f2f5fb 35%, #d7dff0 45%, #e3e8f6 90%, #fff 100%); }
.doc { width: 14px; height: 12px; margin-right: 2px; }
.menubar > button { padding: 0 6px; background: none; line-height: 18px; }
.mdi { display: flex; gap: 1px; margin-left: auto; }
.mdi button { width: 18px; height: 18px; display: grid; place-items: center; border: 1px solid #a9bfd5; background: #e4effa; }
.mdi svg { width: 12px; height: 12px; }
.toolrow { flex: none; height: 37px; border-bottom: 2px solid #777; }
.toolbar { display: inline-flex; align-items: center; height: 32px; padding: 0 5px 0 1px; border: 1px solid #999; border-width: 1px 1px 1px 0; vertical-align: top; }
.toolbar button { position: relative; width: 23px; height: 22px; display: grid; place-items: center; background: none; }
.toolbar b { position: absolute; top: 0; right: 4px; font: bold 9px/9px "Liberation Sans", Arial, sans-serif; }
.toolbar .pressed { border: 1px solid; border-color: #999 #fff #fff #999; background: #f8f8f8; }
.toolbar svg { width: 16px; height: 16px; }
.toolbar i { width: 1px; height: 22px; margin: 0 5px 0 4px; background: #999; }
.canvas { flex: 1; min-height: 0; overflow: hidden; background: #fff; border-left: 2px solid #777; }

.form { width: 685px; height: 507px; border: solid #000; border-width: 0 1px 1px 0; background: #008000; font: 11px/14px "Liberation Sans", Arial, sans-serif; }
.form label { background: #c0c0c0; font-size: 12px; white-space: nowrap; }
.form input { min-width: 0; }
.red { border: 2px solid; border-color: #707070 #fff #fff #707070; background: #f00; padding: 0 2px; }
.form .bold { font-size: 14px; font-weight: 700; line-height: 14px; padding: 0 1px; }
.form .right { text-align: right; }
.form .center { text-align: center; }
.top { display: flex; align-items: flex-start; gap: 6px; height: 42px; padding: 1px 0 0 1px; }
.line { display: flex; width: 442px; gap: 1px; }
.stock { display: flex; width: 116px; height: 19px; background: #c0c0c0; border: 1px solid #e0e0e0; align-items: center; }
.stock label { flex: 1; font-size: 13px; }
.stock input { width: 58px; height: 17px; }
.form .desc { flex: 1; height: 18px; padding: 1px 1px 0; font-size: 12px; font-weight: 700; }
.second { gap: 4px; align-items: center; }
.cyan { height: 18px; border: 1px solid #fff; outline: 1px solid #808080; outline-offset: -2px; background: #0ff; }
.second .cyan { padding: 0 2px; white-space: nowrap; }
.inv { display: flex; width: 140px; height: 20px; margin-left: auto; align-items: center; border: 1px solid; border-color: #808080 #fff #fff #808080; background: #c0c0c0; }
.inv label { flex: 1; }
.inv input { width: 82px; height: 18px; padding: 2px 1px 0; font-size: 12px; }
.panel { display: flex; gap: 2px; padding: 2px 3px; border: 1px solid #fff; background: repeating-linear-gradient(90deg, #c0c0c0 0 2px, #eee 2px 3px); }
.panel button { width: 57px; height: 32px; border: 2px solid; border-color: #fff #808080 #808080 #fff; outline: 1px solid #b0b0b0; outline-offset: -3px; background: #0ff; line-height: 13px; white-space: nowrap; }

.middle { display: flex; height: 338px; }
.leftside { width: 283px; }
.withbar { display: flex; }
table { border-collapse: separate; border-spacing: 0; table-layout: fixed; }
th, td { padding: 0; border: solid #808080; border-width: 0 0 1px 1px; background: #c0c0c0; }
th:last-child, td:last-child { border-right-width: 1px; }
th { height: 22px; border-top-width: 1px; font-weight: 400; padding-bottom: 2px; }
td { height: 20px; vertical-align: middle; }
tbody tr:first-child td { height: 22px; box-shadow: inset 0 2px #008000; padding-top: 2px; }
.cell { display: block; width: calc(100% - 7px); height: 17px; margin: 0 3px 0 4px; padding: 0 1px; border: 2px solid; border-color: #707070 #fff #fff #707070; background: #0f0; line-height: 13px; }
.work { padding-left: 4px; height: 238px; }
.work table { width: 258px; height: 229px; }
.work th { height: 23px; }
.work tbody tr:last-child td { height: 24px; box-shadow: inset 0 -2px #008000; }
.materials table { width: 383px; height: 309px; }
.materials th:first-child, .materials td:first-child { border-left: 0; }
.materials tbody tr:last-child td { height: 25px; box-shadow: inset 0 -3px #008000; }
.materials .cell { margin-left: 3px; }
.jobs table { width: 490px; height: 107px; }
.jobs tbody tr:nth-child(3) td { height: 21px; border-bottom: 0; }
.jobs tbody tr:last-child td { height: 22px; background: #008000; }
.flags table { width: 97px; height: 122px; }
.flags tbody tr:first-child td { height: 23px; border-top: 1px solid #808080; box-shadow: none; padding: 0; }
.flags tbody tr:last-child td { height: 39px; }
.wide { width: 71px; }
.narrow { width: 26px; }
.flags input[type="checkbox"] { appearance: none; display: block; width: 13px; height: 13px; margin-left: 4px; border: 1px solid; border-color: #fff #808080 #808080 #fff; background: #c0c0c0; }

.scroll { display: flex; flex-direction: column; width: 11px; margin-left: 4px; background: #f8f8f8; }
.scroll button { height: 11px; flex: none; border: 1px solid; border-color: #fff #707070 #707070 #fff; background: #f0f0f0; font-size: 7px; line-height: 8px; }
.track { flex: 1; display: flex; }
.thumb { width: 11px; border: 1px solid; border-color: #fff #707070 #707070 #fff; background: #f0f0f0; }
.t-work { height: 105px; }
.t-mat { height: 145px; }
.t-job { height: 44px; }
.t-flag { height: 52px; }
.work .scroll { margin-top: 25px; height: 206px; }
.materials .scroll { margin-top: 24px; height: 287px; }
.jobs .scroll { margin-top: 24px; height: 85px; }
.flags .scroll { height: 126px; }

.summary { display: grid; grid-auto-rows: 18px; gap: 2px; padding: 0 1px 0 2px; }
.hours { display: flex; gap: 1px; }
.est, .act { display: flex; height: 20px; align-items: center; border: 1px solid; border-color: #808080 #fff #fff #808080; background: #c0c0c0; }
.est { width: 132px; }
.act { width: 147px; padding-left: 2px; }
.est label, .act label { flex: 1; }
.est input { width: 69px; height: 18px; }
.act input { width: 78px; height: 18px; }
.cost { display: grid; grid-template-columns: 179px 100px; gap: 1px; padding-top: 1px; height: 19px; }
.cost label { border: 2px solid; border-color: #808080 #fff #fff #808080; text-align: center; line-height: 14px; }
.bottom { display: flex; padding-left: 4px; }
.jobs { width: 515px; padding-top: 10px; }
.flags { align-items: flex-start; }
.flags table { margin-top: 2px; }

.status { display: flex; flex: none; gap: 3px; height: 22px; padding-top: 2px; border-top: 1px solid #ddd; }
.status span { border: 1px solid; border-color: #a0a0a0 #fff #fff #a0a0a0; line-height: 17px; white-space: nowrap; }
.grow { flex: 1; }
.s1 { width: 99px; padding-left: 1px; }
.s2 { width: 113px; padding-left: 1px; }
.s3 { width: 130px; display: flex; justify-content: flex-end; align-items: flex-end; }
.s3 svg { width: 14px; height: 14px; }

.taskbar {
  position: absolute; right: 0; bottom: 0; left: 0; height: 40px; display: flex; align-items: center; gap: 4px; border-top: 1px solid #10283c; box-shadow: inset 0 1px rgba(200, 230, 250, .6);
  background: linear-gradient(90deg, #2f6a9b 0, #1a5d92 5%, #3f9cd2 8%, #49a7d9 35%, #3c93d3 55%, #2769af 75%, #1f4f88 88%, #14345f 100%);
}
.taskbar button { background: none; }
.start { width: 56px; height: 40px; display: grid; place-items: center; }
.start svg { width: 38px; height: 38px; }
.task { width: 58px; height: 38px; display: grid; place-items: center; border-radius: 3px; }
.task svg { width: 32px; height: 32px; }
.taskbar .open { border: 1px solid #12405f; box-shadow: inset 0 0 0 1px rgba(230, 245, 255, .6); background: linear-gradient(135deg, rgba(240, 250, 255, .6) 0, rgba(170, 215, 240, .35) 50%, rgba(120, 190, 230, .35) 100%); }
.taskbar .active { background: linear-gradient(135deg, rgba(250, 253, 255, .85) 0, rgba(190, 225, 245, .6) 50%, rgba(170, 215, 240, .7) 100%); }
.tray { display: flex; align-items: center; gap: 8px; height: 39px; margin-left: auto; color: #fff; }
.tray svg { width: 8px; height: 16px; }
.tray .w16 { width: 16px; }
.tray .more { margin-right: 4px; }
.clock { display: flex; flex-direction: column; align-items: center; width: 66px; margin-left: 6px; line-height: 17px; }
.tray .peek { width: 14px; height: 38px; border: 1px solid #7f9bb8; background: linear-gradient(135deg, #8aa5bf, #25466f 50%, #3a5b82); }
</style>
